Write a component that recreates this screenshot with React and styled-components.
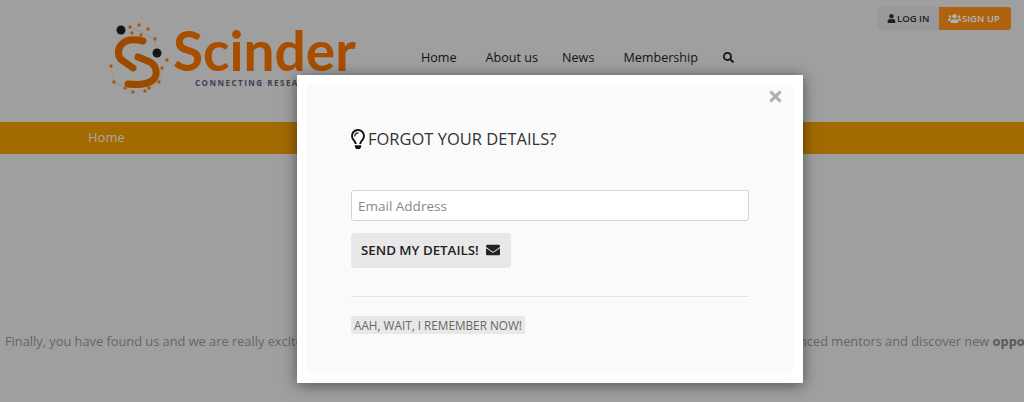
import React from "react";
import styled, { createGlobalStyle } from "styled-components";
import { FaUser, FaUsers, FaSearch, FaEnvelope, FaRegLightbulb, FaTimes } from "react-icons/fa";

const Global = createGlobalStyle`
  html, body {
    margin: 0;
    height: 100%;
    overflow: hidden;
    background: #e4e4e4;
    font-family: "Open Sans", "Liberation Sans", sans-serif;
  }
  * { box-sizing: border-box; }
`;

const Page = styled.div`
  position: relative;
  width: 1024px;
  height: 402px;
  overflow: hidden;
`;

const Header = styled.header`
  height: 122px;
  padding: 7px 13px 0 107px;
  display: flex;
  flex-direction: column;
`;

const AuthBar = styled.div`
  display: flex;
  justify-content: flex-end;
  height: 23px;
`;

const AuthButton = styled.a`
  display: flex;
  align-items: center;
  gap: 1px;
  width: ${(p) => (p.$primary ? 72 : 62)}px;
  padding-left: ${(p) => (p.$primary ? 9 : 10)}px;
  font-size: 9.5px;
  font-weight: 600;
  background: ${(p) => (p.$primary ? "#fb8f15" : "#dbdbdb")};
  color: ${(p) => (p.$primary ? "#ffffff" : "#303030")};
  border-radius: ${(p) => (p.$primary ? "0 3px 3px 0" : "3px 0 0 3px")};
`;

const Brand = styled.div`
  display: flex;
  align-items: flex-start;
  margin-top: -8px;
`;

const LogoMark = styled.svg`
  width: 68px;
  height: 72px;
  flex: none;
`;

const Wordmark = styled.div`
  display: flex;
  flex-direction: column;
  width: 246px;
`;

const Name = styled.div`
  font-family: Lato, "Open Sans", sans-serif;
  font-size: 55px;
  line-height: 55px;
  margin: 1px 0 0 -2px;
  font-weight: 700;
  color: #f07000;
`;

const Tagline = styled.div`
  font-size: 8px;
  font-weight: 700;
  letter-spacing: 1.5px;
  margin: -1px 0 0 20px;
  white-space: nowrap;
  color: #566078;
`;

const Nav = styled.nav`
  display: flex;
  align-items: center;
  margin-top: 27px;
  font-size: 12.6px;
  font-weight: 500;
  color: #1c1c1c;
`;

const NavLink = styled.a`
  margin-right: ${(p) => p.$gap}px;
  color: inherit;
`;

const OrangeBar = styled.div`
  height: 32px;
  background: #ea9800;
  display: flex;
  align-items: center;
  padding: 0 0 2px 88px;
  font-size: 13px;
  color: #eeeeee;
`;

const Intro = styled.p`
  margin: 178px 0 0 5px;
  font-size: 12.8px;
  line-height: 18px;
  white-space: nowrap;
  color: #929292;

  b { font-weight: 700; color: #808080; }
`;

const Scrim = styled.div`
  position: absolute;
  inset: 0;
  background: rgba(0, 0, 0, 0.3);
`;

const Modal = styled.section`
  position: absolute;
  left: 297px;
  top: 75px;
  width: 506px;
  height: 308px;
  background: #fff;
  padding: 10px;
  box-shadow: 0 2px 14px rgba(0, 0, 0, 0.5);
`;

const ModalBody = styled.div`
  height: 100%;
  padding: 42px 44px 0;
  background-color: #fbfbfb;
  background-image: radial-gradient(#f9f9f9 1px, transparent 1px);
  background-size: 4px 4px;
`;

const CloseButton = styled.span`
  position: absolute;
  top: 13px;
  right: 19px;
  font-size: 17px;
  color: #b0b0b0;
  display: flex;
`;

const Title = styled.h2`
  margin: 0;
  display: flex;
  align-items: center;
  gap: 3px;
  font-size: 16.5px;
  line-height: 24px;
  font-weight: 400;
  color: #333;

  svg { width: 14px; height: 20px; color: #111; }
`;

const EmailInput = styled.input`
  display: block;
  width: 398px;
  height: 31px;
  margin-top: 39px;
  padding: 0 6px;
  font: 400 13.5px "Open Sans", sans-serif;
  background: #fff;
  border: 1px solid #d4d4d4;
  border-radius: 3px;

  &::placeholder { color: #888; opacity: 1; }
`;

const SendButton = styled.button`
  display: flex;
  align-items: center;
  gap: 7px;
  width: 160px;
  height: 35px;
  margin-top: 12px;
  padding: 0 10px 1px;
  border: 0;
  border-radius: 4px;
  background: #e8e8e8;
  color: #222;
  font: 600 13.3px "Open Sans", sans-serif;
  white-space: nowrap;

  svg { font-size: 14px; flex: none; }
`;

const Rule = styled.hr`
  width: 398px;
  margin: 28px 0 16px;
  border: 0;
  border-top: 1px solid #e5e5e5;
`;

const BackLink = styled.a`
  display: inline-block;
  padding: 0 3px;
  border-radius: 2px;
  background: #e8e8e8;
  font-size: 11.75px;
  line-height: 18px;
  color: #666;
`;

function Logo() {
  const dots = [
    [23, 5], [32, 3], [41, 7], [25, 11], [34, 13], [48, 17], [10, 28], [4, 44], [7, 60], [18, 66], [26, 70], [38, 69], [55, 46], [60, 38], [52, 60], [42, 66],
  ];
  return (
    <LogoMark viewBox="0 0 68 72">
      <path d="M23 5 L48 17 L50 31 M10 28 L25 11 M4 44 L7 60 L26 70 M55 46 L52 60 L42 66" fill="none" stroke="#e8801e" strokeWidth="0.4" opacity="0.6" />
      {dots.map(([x, y]) => (
        <circle key={`${x}-${y}`} cx={x} cy={y} r="1.7" fill="#e8801e" />
      ))}
      <path d="M36 19 C28 17 20 17 15 22 C10 27 10 35 16 39 L26 46" fill="none" stroke="#e06a00" strokeWidth="7" strokeLinecap="round" />
      <path d="M31 35 L43 40 C50 44 51 53 46 58 C40 63 30 63 21 62" fill="none" stroke="#e06a00" strokeWidth="7" strokeLinecap="round" />
      <circle cx="14" cy="8" r="4.5" fill="#1c1c24" />
      <circle cx="50" cy="31" r="4.5" fill="#1c1c24" />
    </LogoMark>
  );
}

export default function App() {
  return (
    <Page>
      <Global />
      <Header>
        <AuthBar>
          <AuthButton><FaUser size={9} /> LOG IN</AuthButton>
          <AuthButton $primary><FaUsers size={13} /> SIGN UP</AuthButton>
        </AuthBar>
        <Brand>
          <Logo />
          <Wordmark>
            <Name>Scinder</Name>
            <Tagline>CONNECTING RESEARCHERS</Tagline>
          </Wordmark>
          <Nav>
            <NavLink $gap={29}>Home</NavLink>
            <NavLink $gap={24}>About us</NavLink>
            <NavLink $gap={29}>News</NavLink>
            <NavLink $gap={25}>Membership</NavLink>
            <FaSearch size={11} />
          </Nav>
        </Brand>
      </Header>
      <OrangeBar>Home</OrangeBar>
      <Intro>
        Finally, you have found us and we are really excited to have you here, come along and meet our research community of really experienced mentors and discover new <b>opportunities</b>
      </Intro>
      <Scrim />
      <Modal>
        <ModalBody>
          <Title><FaRegLightbulb /> FORGOT YOUR DETAILS?</Title>
          <EmailInput placeholder="Email Address" />
          <SendButton>SEND MY DETAILS! <FaEnvelope /></SendButton>
          <Rule />
          <BackLink>AAH, WAIT, I REMEMBER NOW!</BackLink>
        </ModalBody>
        <CloseButton><FaTimes /></CloseButton>
      </Modal>
    </Page>
  );
}
